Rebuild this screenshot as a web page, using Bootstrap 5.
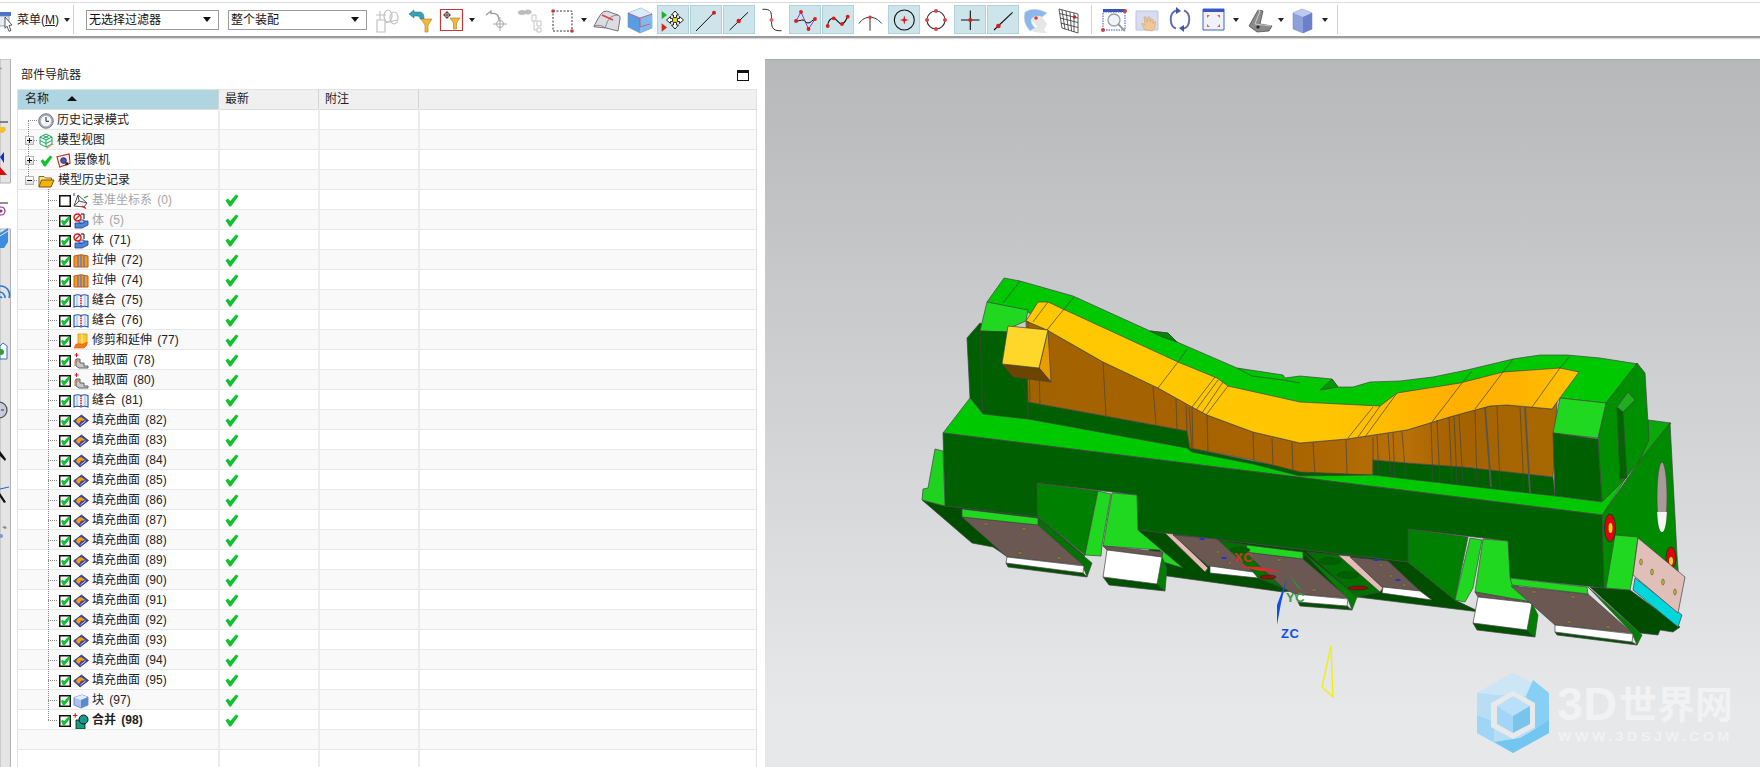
<!DOCTYPE html>
<html lang="zh-CN">
<head>
    <meta charset="UTF-8">
    <meta name="viewport" content="width=device-width, initial-scale=1.0">
    <title>部件导航器</title>
    <link href="https://cdn.jsdelivr.net/npm/bootstrap@5.3.0/dist/css/bootstrap.min.css" rel="stylesheet">
    <script src="https://cdn.jsdelivr.net/npm/bootstrap@5.3.0/dist/js/bootstrap.bundle.min.js"></script>
    <style>
        html, body { height: 767px; overflow: hidden; background: #fff; }
        body { font: 12px/20px "Liberation Sans", "Noto Sans CJK SC", sans-serif; color: #222; }

        /* toolbar */
        .cad-toolbar { margin-top: 2px; border-top: 1px solid #d9d9d9; border-bottom: 2px solid #9c9c9c; padding: 2px 0; height: 36px; box-shadow: 0 1px 1px #d8d8d8; }
        .tool-group { gap: 1px; }
        .tool { flex: none; width: 32px; height: 29px; padding: 0; border: 1px solid transparent; border-radius: 0; line-height: 0; }
        .tool svg { display: block; margin: -1px; width: 32px; height: 29px; }
        .tool-on { background: #cde4ea; border-color: #aed3dc; }
        .tool-narrow { width: 26px; }
        .tool-narrow svg { width: 26px; }
        .tool-caret { flex: none; width: 11px; height: 29px; position: relative; }
        .tool-caret::after { content: ""; position: absolute; left: 2px; top: 13px; border: 3.5px solid transparent; border-top: 4px solid #222; border-bottom: 0; }
        .caret-lg { width: 13px; }
        .caret-lg::after { left: 3px; }
        .caret-sm { width: 9px; }
        .caret-sm::after { left: 1px; }
        .caret-xl { width: 14px; }
        .caret-xl::after { left: 4px; }
        .tool-sep { flex: none; width: 1px; height: 29px; background: #d2d2d2; }
        .sep-a { margin: 0 12px 0 1px; }
        .sep-b { margin: 0 6px; }
        .sep-c { margin-left: 6px; }
        .menu-icon { flex: none; width: 13px; height: 24px; margin-right: 4px; }
        .menu-label { flex: none; width: 46px; white-space: nowrap; }
        .menu-label u { text-underline-offset: 1px; }
        .filter-select { flex: none; width: 133px; height: 20px; padding: 0 0 0 2px; font-size: 12px; line-height: 18px; color: #111; border: 1px solid #9a9a9a; border-radius: 0; background-position: right 7px center; background-size: 8px 5px; background-image: url("data:image/svg+xml,%3csvg xmlns='http://www.w3.org/2000/svg' viewBox='0 0 8 5'%3e%3cpath d='M0 0h8L4 5z' fill='%23111'/%3e%3c/svg%3e"); font-family: inherit; }
        .filter-wide { width: 139px; margin: 0 5px 0 9px; }

        /* workspace */
        .work-area { margin-top: 21px; height: 708px; }
        .res-strip { flex: none; width: 11px; }
        .res-strip svg { display: block; }
        .nav-panel { flex: none; width: 746px; padding-left: 6px; }
        .nav-title { height: 30px; padding: 2px 8px 0 4px; }
        .max-box { width: 12px; height: 11px; border: 1px solid #111; border-top-width: 3px; }
        .gutter { flex: none; width: 8px; }
        .view-port { flex: none; width: 995px; height: 708px; border-top: 1px solid #a9aaac; background: linear-gradient(#b7b8ba, #e7e8ea 92%); }
        .view-port svg { display: block; }

        /* tree table */
        .tree-table { width: 740px; table-layout: fixed; margin: 0; border-left: 1px solid #e2e2e2; border-top: 1px solid #e2e2e2; border-right: 1px solid #e2e2e2; font-size: 12px; color: #222; }
        .tree-table th, .tree-table td { padding: 0; height: 20px; line-height: 19px; border-bottom: 1px solid #e8e8e8; border-right: 2px solid #ececec; box-shadow: none; background: #fff; font-weight: 400; }
        .tree-table th { height: 20px; background: #f0f0f0; border-right: 1px solid #d4d4d4; border-bottom: 1px solid #dcdcdc; padding-left: 6px; }
        .tree-table th.sorted { background: #aed5e0; padding-left: 7px; }
        .tree-table tbody tr:nth-child(even) td { background: #f9f9f9; }
        .tree-table td:last-child, .tree-table th:last-child { border-right: 0; }
        .sort-arrow { display: inline-block; margin-left: 18px; vertical-align: 2px; border: 5px solid transparent; border-bottom: 5px solid #111; border-top: 0; }
        .tree-item { position: relative; height: 20px; padding-top: 1px; margin-bottom: -1px; white-space: nowrap; word-spacing: 2px; }
        .lv0 { padding-left: 20px; }
        .lv1 { padding-left: 41px; }
        .tree-item svg { flex: none; }
        .tree-item .node-icon { margin-left: 2px; margin-right: 3px; }
        .lv0 .node-icon { margin-left: 0; }
        .lv0 .cam-check { margin: 0 3px 0 2px; }
        .is-off { color: #a6a6a6; }
        .is-bold { font-weight: 700; }
        .latest-check { display: block; margin: 4px 0 0 5px; }
        .tree-item::before { content: ""; position: absolute; left: 10px; top: -1px; bottom: 0; border-left: 1px dotted #8a8a8a; }
        .tree-item::after { content: ""; position: absolute; left: 10px; top: 10px; width: 9px; border-top: 1px dotted #8a8a8a; }
        .lv1::before { left: 30px; }
        .lv1::after { left: 30px; width: 9px; }
        .line-start::before { top: 10px; }
        .line-end::before { bottom: 10px; }
        .exp-box { position: absolute; z-index: 1; left: 7px; top: 6px; width: 9px; height: 9px; border: 1px solid #b4b4b4; background: linear-gradient(#fff, #ddd); }
        .exp-box::before { content: ""; position: absolute; left: 1px; top: 3px; width: 5px; height: 1px; background: #111; }
        .exp-plus::after { content: ""; position: absolute; left: 3px; top: 1px; width: 1px; height: 5px; background: #111; }
        .cad-label { font: 700 13px "Liberation Sans", sans-serif; letter-spacing: .5px; }
        .wm-big { font: 700 47px "Liberation Sans", "Noto Sans CJK SC", sans-serif; }
        .wm-cjk { font: 700 38px "Noto Sans CJK SC", sans-serif; }
        .wm-url { font: 700 12px "Liberation Sans", sans-serif; letter-spacing: 3px; }
    </style>
</head>
<body>
    <!-- icon sprite -->
    <svg width="0" height="0" class="position-absolute">
        <symbol id="i-check" viewBox="0 0 14 13"><path d="M.5 6.500 3 4.600 5.200 7 11 .5l2.500 1.600L6 12.500H4.400z" fill="#10c22e"/></symbol>
        <symbol id="i-clock" viewBox="0 0 16 16"><circle cx="8" cy="8" r="7.300" fill="#aab0bc" stroke="#5c6470" stroke-width=".8"/><circle cx="8" cy="8" r="5.200" fill="#f6f6f6"/><path d="M8 4v4.300h3" fill="none" stroke="#222" stroke-width="1"/></symbol>
        <symbol id="i-view" viewBox="0 0 16 16"><path d="M8 1 14 4v7l-6 3-6-3V4zM2 4l6 3 6-3M8 7v7M5 2.500l6 3M11 2.500l-6 3M2 7.500l6 3 6-3" fill="none" stroke="#1aa862" stroke-width="1"/><path d="M8 15l6-3 .5-1.500 1.500.8-1 .3-6 4z" fill="#e24a20"/></symbol>
        <symbol id="i-camera" viewBox="0 0 16 16"><path d="M1 4 14 1l1 10-11 4z" fill="#fbeee8" stroke="#c8281c" stroke-width="1.200"/><circle cx="8" cy="8" r="3" fill="#4a5cae" stroke="#1c2a70"/><path d="M10 10h3v3h-3z" fill="#222"/></symbol>
        <symbol id="i-folder" viewBox="0 0 17 16"><path d="M1 14V3.500h5l1.500 1.500h6V7" fill="#f8e6a0" stroke="#8a6410"/><path d="M1 14 3.500 7H16l-3 7z" fill="#f4b400" stroke="#7a5808"/></symbol>
        <symbol id="i-datum" viewBox="0 0 16 16"><path d="M1 13 5 2l9 8-3 4zM5 2l1 6 8 2M6 8l-5 5" fill="#f2f2f2" stroke="#555" stroke-width="1"/><path d="M11 5l4-2" stroke="#2aa02a" stroke-width="1.300"/><path d="M9 13l4 2.500" stroke="#d02020" stroke-width="1.300"/><path d="M1 0v3" stroke="#2040c0" stroke-width="1"/></symbol>
        <symbol id="i-body" viewBox="0 0 16 16"><path d="M2 10h7V8h6v4l-6 3H2z" fill="#4f86d6" stroke="#1f3f90" stroke-width=".8"/><path d="M6 7h5v3H6z" fill="#a9c8f0" stroke="#1f3f90" stroke-width=".8"/><circle cx="4.500" cy="4.500" r="3.500" fill="#fff" stroke="#d81818" stroke-width="1.400"/><path d="M2 7l5-5" stroke="#d81818" stroke-width="1.200"/><path d="M8 1h3v5" fill="none" stroke="#111" stroke-width="1"/></symbol>
        <symbol id="i-extrude" viewBox="0 0 16 16"><path d="M1 3q7-2.500 14 0v11H1z" fill="#f49a20" stroke="#c25c08" stroke-width="1"/><path d="M5 2.500V14M8 2V14M11 2.500V14" stroke="#5870c8" stroke-width="1.200"/></symbol>
        <symbol id="i-sew" viewBox="0 0 16 16"><path d="M1 2.500q4-1.500 7 0 3-1.500 7 0V14q-4-1.500-7 0-3-1.500-7 0z" fill="#e8f2fc" stroke="#1f55b0" stroke-width="1.100"/><path d="M8 2.500V14" stroke="#d02828" stroke-width="1.600" stroke-dasharray="1.500 .8"/><path d="M4 3v10M12 3v10" stroke="#6f9ee0" stroke-width=".7"/></symbol>
        <symbol id="i-trim" viewBox="0 0 16 16"><path d="M5 1h9v10H5z" fill="#fbc738" stroke="#d69400" stroke-width=".8"/><path d="M9 1v10" stroke="#fff2a8"/><path d="M1 15l2-4h8l3-2v3l-3 3z" fill="#f47a10" stroke="#d2600c" stroke-width=".6"/></symbol>
        <symbol id="i-extract" viewBox="0 0 16 16"><path d="M3 6h4v4h4v3h4v2H6l-3-2z" fill="#c4c8cc" stroke="#555" stroke-width=".9"/><path d="M3 8h4M3 6l-1 2v5" fill="none" stroke="#d26a30" stroke-width=".9"/><path d="M1.500 2h4M3.500 0v4" stroke="#d82020" stroke-width="1.200"/></symbol>
        <symbol id="i-fill" viewBox="0 0 16 16"><path d="M.5 8 8.500 2 15.500 7.500 7 14z" fill="#3f479e" stroke="#23296e" stroke-width=".7"/><path d="M3 8.500Q4 4.500 8.500 4.300L12.500 7.300 8 7.800 6 11z" fill="#f5a00c"/><path d="M12.500 8 7.500 12" stroke="#e6e8f6" stroke-width=".8"/></symbol>
        <symbol id="i-block" viewBox="0 0 16 16"><path d="M1 4.500 9 2l6 2v8l-7 3-7-3z" fill="#a9c3ee" stroke="#5f7fc2" stroke-width=".8"/><path d="M1 4.500 8 7l7-3-6-2z" fill="#e0ebfb"/><path d="M8 7v8l7-3V4z" fill="#5f88d4"/></symbol>
        <symbol id="i-unite" viewBox="0 0 16 16"><path d="M3 7h9v9H3z" fill="#1a9a88" stroke="#111" stroke-width=".8"/><circle cx="10.500" cy="6.500" r="4.500" fill="#1a9a88" stroke="#111" stroke-width="1"/><path d="M0 2.500h4.500M2.200 .2v4.600" stroke="#e01010" stroke-width="1.100"/></symbol>

        <symbol id="t-chain" viewBox="0 0 32 29"><g fill="none" stroke="#c2c2c2" stroke-width="1.200"><path d="M5 15h8v12H5zM8 6v9M4 10h10"/><ellipse cx="16" cy="11" rx="4" ry="6"/><ellipse cx="22" cy="13" rx="4" ry="6"/><path d="M13 18l12-3"/></g></symbol>
        <symbol id="t-filter-back" viewBox="0 0 32 29"><path d="M4 9l5-4v2h5c4 0 5 2 5 7h-4c0-2-1-3-3-3H9v2z" fill="#38a0b0" stroke="#1f7080" stroke-width=".5"/><path d="M16 14h11l-4 6v7h-3v-7z" fill="#f2b83c" stroke="#a87a18" stroke-width=".6"/></symbol>
        <symbol id="t-filter-cross" viewBox="0 0 26 29"><path d="M2.500 4.500h22v21h-22z" fill="#fff" stroke="#c73838" stroke-width="1.200"/><circle cx="9" cy="10" r="2.500" fill="none" stroke="#8a2a2a"/><path d="M9 6v8M5 10h8" stroke="#222" stroke-width=".8"/><path d="M12 13h10l-3.500 5v6h-3v-6z" fill="#f2b83c" stroke="#a87a18" stroke-width=".6"/></symbol>
        <symbol id="t-undo-cross" viewBox="0 0 32 29"><path d="M6 10l5-4v2.500c5-.5 8 1 8 7" fill="none" stroke="#9a9a9a" stroke-width="1.300"/><circle cx="20" cy="19" r="3.500" fill="none" stroke="#a8a8a8"/><path d="M20 12v14M13 19h14" stroke="#a8a8a8"/></symbol>
        <symbol id="t-binoc" viewBox="0 0 32 29"><g fill="#bdbdbd"><ellipse cx="9" cy="7.500" rx="4" ry="2.500"/><ellipse cx="15" cy="7" rx="3.500" ry="2.500"/></g><path d="M19 10h4v6h-4zM24 16h4v5h-4zM24 23h4v4h-4zM21 16v9h3" fill="none" stroke="#c4c4c4"/></symbol>
        <symbol id="t-dash" viewBox="0 0 32 29"><path d="M7 6h19v20H7z" fill="none" stroke="#333" stroke-dasharray="2 1.500"/><circle cx="7" cy="6" r="1.800" fill="#d83030"/><circle cx="26" cy="26" r="1.800" fill="#d83030"/></symbol>
        <symbol id="t-wedge" viewBox="0 0 32 29"><path d="M3 21Q7 13 10 9q2-3 6-3l11 4q3 1 2 4l-2 12-12-3-10-1q-3 0-2-1z" fill="#dcdde2" stroke="#555" stroke-width=".8"/><path d="M3 21q8-2 11 2 2-8 6-11 3-2 7-2" fill="none" stroke="#666" stroke-width=".7"/><path d="M11 10l11 5" stroke="#e04040" stroke-width="1.500"/></symbol>
        <symbol id="t-cube-red" viewBox="0 0 32 29"><path d="M4 8 17 3l11 6v14l-12 5-12-6z" fill="#5a9ce0" stroke="#6d90c8" stroke-width=".6"/><path d="M4 8 16 13l12-4-11-6z" fill="#d8ecfb"/><path d="M16 13v15l12-5V9z" fill="#82b8ea"/><path d="M4 8l12 5 12-4M16 13v9l10-3" fill="none" stroke="#d84060" stroke-width=".7"/></symbol>
        <symbol id="t-snap" viewBox="0 0 32 29"><path d="M4.700 6 10 10l-5.300 4.300z" fill="#20b030"/><path d="M4.700 18.300 10 22.500l-5.300 4.200z" fill="#d02818"/><g fill="#fff" stroke="#111" stroke-width=".9"><path d="M18 6l-3.500 4H16.500v2.500h3V10h2zM18 24l-3.500-4H16.500v-2.500h3V20h2zM9.500 15l4-3.500v2h2v3h-2v2zM26.500 15l-4-3.500v2h-2v3h2v2z"/></g><circle cx="18" cy="15" r="2" fill="#ffe000" stroke="#b09000" stroke-width=".5"/></symbol>
        <symbol id="t-line-end" viewBox="0 0 32 29"><path d="M6 26 24 7.700" stroke="#111"/><circle cx="24" cy="7.700" r="2" fill="#d81c1c"/></symbol>
        <symbol id="t-line-mid" viewBox="0 0 32 29"><path d="M6.700 25 25 7.300" stroke="#111"/><circle cx="15.700" cy="16" r="2.200" fill="#d81c1c"/></symbol>
        <symbol id="t-curve" viewBox="0 0 32 29"><path d="M6.500 4.300c9-.5 9 3 9 10s0 12 10 11.400" fill="none" stroke="#333"/><circle cx="15.500" cy="15" r="2" fill="#e06a60"/></symbol>
        <symbol id="t-poly" viewBox="0 0 32 29"><path d="M7 16 12 7l7.500 17L26 14" fill="none" stroke="#a030d8"/><path d="M7 16c3 0 5-1 7-1s2 3 5 3 4-3 7-4" fill="none" stroke="#111"/><circle cx="7" cy="16" r="1.900" fill="#d81c1c"/><circle cx="12" cy="7" r="1.900" fill="#d81c1c"/><circle cx="19.500" cy="24" r="1.900" fill="#d81c1c"/><circle cx="26" cy="14" r="1.900" fill="#d81c1c"/></symbol>
        <symbol id="t-spline" viewBox="0 0 32 29"><path d="M5.700 21c0-5 3-8 6-7.700s5 6 8 5.700 4-4 6-7.300" fill="none" stroke="#111" stroke-width="1.100"/><circle cx="5.700" cy="21" r="1.900" fill="#d81c1c"/><circle cx="11.700" cy="13.300" r="1.900" fill="#d81c1c"/><circle cx="20" cy="19" r="1.900" fill="#d81c1c"/><circle cx="25.700" cy="11.700" r="1.900" fill="#d81c1c"/></symbol>
        <symbol id="t-arc" viewBox="0 0 32 29"><path d="M4 18.500C7 14 11 12.300 15 12.300s8 1.700 11.700 6.200M15 12.300v13.400" fill="none" stroke="#333"/><circle cx="15" cy="12.300" r="1.800" fill="#d83c3c"/></symbol>
        <symbol id="t-circle-c" viewBox="0 0 32 29"><circle cx="16.300" cy="15" r="10" fill="none" stroke="#111" stroke-width="1.100"/><path d="M16.300 10.500l1 3.500 3.500 1-3.500 1-1 3.500-1-3.500-3.500-1 3.500-1z" fill="#d81c1c"/></symbol>
        <symbol id="t-circle-4" viewBox="0 0 32 29"><circle cx="15" cy="15" r="9" fill="none" stroke="#333" stroke-width="1.100"/><g fill="#d84848"><circle cx="15" cy="6" r="2"/><circle cx="15" cy="24" r="2"/><circle cx="6" cy="15" r="2"/><circle cx="24" cy="15" r="2"/></g></symbol>
        <symbol id="t-cross" viewBox="0 0 32 29"><path d="M7 15h18.500M16.300 5.500V25" stroke="#111" stroke-width="1.100"/><circle cx="16.300" cy="15" r="2" fill="#d81c1c"/></symbol>
        <symbol id="t-line-low" viewBox="0 0 32 29"><path d="M7 25 25.600 7.300" stroke="#111" stroke-width="1.100"/><circle cx="11.400" cy="21" r="2.300" fill="#d81c1c"/></symbol>
        <symbol id="t-surface" viewBox="0 0 32 29"><path d="M5 7Q14 1 27 8l-5 4Q14 9 11 15q0 4 4 8l-5 3Q2 17 5 7z" fill="#8ab8e8" stroke="#c4d4e8" stroke-width=".6"/><path d="M10 26 15 23q4-4 12 5-9 0-17-2zM11 15q4-6 11-3l5 7-4 8z" fill="#e6e6e6"/><circle cx="16" cy="13" r="1.800" fill="#d83c3c"/></symbol>
        <symbol id="t-grid" viewBox="0 0 32 29"><path d="M6 4 25 9v19L9 23zM9 4.800 12 24.300M13 6 15.500 25M17 7l1.500 19M21 8v19M6.500 8.500 25 13M7 13l18 4.500M7.700 18 25 22.500" fill="none" stroke="#333" stroke-width=".8"/><circle cx="21.500" cy="12" r="1.800" fill="#d81c1c"/></symbol>
        <symbol id="t-zoom-box" viewBox="0 0 32 29"><path d="M5 4h22v3H5z" fill="#3a56b0"/><path d="M5 7h22v18H5z" fill="#fff" stroke="#3a56c0" stroke-dasharray="1.500 1"/><circle cx="16" cy="15" r="6" fill="#eef4fa" stroke="#a0a0a0" stroke-width="1.300"/><path d="M20 19l7 7" stroke="#999" stroke-width="1.800"/><circle cx="27" cy="6" r="2" fill="#d83c3c"/><circle cx="5" cy="25" r="2" fill="#d83c3c"/></symbol>
        <symbol id="t-hand" viewBox="0 0 32 29"><path d="M5 6h22v19H5z" fill="#d8dcf0" stroke="#c0c4d8"/><path d="M14 25c-2-3-4-6-3-7l3 2-1-8 2 0 1 5 1-5 2 0v5l1-3 2 .5v4l1-2 1.500.5c0 4-1 7-3 9z" fill="#f0c898" stroke="#c49a68" stroke-width=".5"/></symbol>
        <symbol id="t-rotate" viewBox="0 0 32 29"><path d="M12 5.500C5 8 5 21 12 23.500" fill="none" stroke="#5a70c0" stroke-width="2"/><path d="M20 23.500C27 21 27 8 20 5.500" fill="none" stroke="#6a6fa8" stroke-width="2"/><path d="M12 2l5 4-5 3zM20 27l-5-4 5-3z" fill="#3f56a8"/></symbol>
        <symbol id="t-fit" viewBox="0 0 32 29"><path d="M6 4h21v21H6z" fill="#f0f2fa" stroke="#4060c0"/><path d="M6 4h21v3H6z" fill="#3a56c0"/><path d="M10 10h3l-3 3zM23 10h-3l3 3zM10 22h3l-3-3zM23 22h-3l3-3z" fill="#e86040"/></symbol>
        <symbol id="t-gear" viewBox="0 0 32 29"><path d="M5 21 14 5l5 1-3 13 12 2-3 5-12 1z" fill="#8a8a8a" stroke="#444" stroke-width=".7"/><path d="M14 5l2 1-5 13 16 2" fill="none" stroke="#ddd" stroke-width=".8"/><circle cx="14" cy="22" r="1.600" fill="#222"/></symbol>
        <symbol id="t-cube" viewBox="0 0 32 29"><path d="M6 8 15 4l10 4v16l-9 4-10-4z" fill="#8da0dc" stroke="#7a8cc8" stroke-width=".6"/><path d="M6 8l10 4 9-4-10-4z" fill="#bccaf0"/><path d="M16 12v16l9-4V8z" fill="#6c80c8"/></symbol>
    </svg>

    <header class="cad-toolbar d-flex align-items-center">
        <svg class="menu-icon" viewBox="0 0 13 24"><path d="M-2 4h13v4H-2z" fill="#4a72c8"/><path d="M-2 8h11v10H-2z" fill="#e8ecf4" stroke="#7a8aa8" stroke-width=".8"/><path d="M5 9l7 8-3 .5 2 5-2 .8-2-5-2 2z" fill="#fff" stroke="#333" stroke-width=".8"/></svg>
        <span class="menu-label">菜单(<u>M</u>)</span>
        <span class="tool-caret caret-sm"></span>
        <span class="tool-sep sep-a"></span>
        <select class="form-select filter-select" aria-label="过滤器"><option>无选择过滤器</option></select>
        <select class="form-select filter-select filter-wide" aria-label="范围"><option>整个装配</option></select>
        <div class="tool-group d-flex align-items-center">
            <button type="button" class="btn tool"><svg><use href="#t-chain"/></svg></button>
            <button type="button" class="btn tool"><svg><use href="#t-filter-back"/></svg></button>
            <button type="button" class="btn tool tool-narrow"><svg viewBox="0 0 26 29"><use href="#t-filter-cross"/></svg></button>
            <span class="tool-caret caret-xl"></span>
            <button type="button" class="btn tool"><svg><use href="#t-undo-cross"/></svg></button>
            <button type="button" class="btn tool"><svg><use href="#t-binoc"/></svg></button>
            <button type="button" class="btn tool"><svg><use href="#t-dash"/></svg></button>
            <span class="tool-caret"></span>
            <button type="button" class="btn tool"><svg><use href="#t-wedge"/></svg></button>
            <button type="button" class="btn tool"><svg><use href="#t-cube-red"/></svg></button>
            <button type="button" class="btn tool tool-on"><svg><use href="#t-snap"/></svg></button>
            <button type="button" class="btn tool tool-on"><svg><use href="#t-line-end"/></svg></button>
            <button type="button" class="btn tool tool-on"><svg><use href="#t-line-mid"/></svg></button>
            <button type="button" class="btn tool"><svg><use href="#t-curve"/></svg></button>
            <button type="button" class="btn tool tool-on"><svg><use href="#t-poly"/></svg></button>
            <button type="button" class="btn tool tool-on"><svg><use href="#t-spline"/></svg></button>
            <button type="button" class="btn tool"><svg><use href="#t-arc"/></svg></button>
            <button type="button" class="btn tool tool-on"><svg><use href="#t-circle-c"/></svg></button>
            <button type="button" class="btn tool"><svg><use href="#t-circle-4"/></svg></button>
            <button type="button" class="btn tool tool-on"><svg><use href="#t-cross"/></svg></button>
            <button type="button" class="btn tool tool-on"><svg><use href="#t-line-low"/></svg></button>
            <button type="button" class="btn tool"><svg><use href="#t-surface"/></svg></button>
            <button type="button" class="btn tool"><svg><use href="#t-grid"/></svg></button>
        </div>
        <span class="tool-sep sep-b"></span>
        <div class="tool-group d-flex align-items-center">
            <button type="button" class="btn tool"><svg><use href="#t-zoom-box"/></svg></button>
            <button type="button" class="btn tool"><svg><use href="#t-hand"/></svg></button>
            <button type="button" class="btn tool"><svg><use href="#t-rotate"/></svg></button>
            <button type="button" class="btn tool"><svg><use href="#t-fit"/></svg></button>
            <span class="tool-caret caret-lg"></span>
            <button type="button" class="btn tool"><svg><use href="#t-gear"/></svg></button>
            <span class="tool-caret caret-sm"></span>
            <button type="button" class="btn tool"><svg><use href="#t-cube"/></svg></button>
            <span class="tool-caret"></span>
        </div>
        <span class="tool-sep sep-c"></span>
    </header>

    <div class="work-area d-flex">
        <aside class="res-strip">
            <svg width="11" height="708" viewBox="0 59 11 708">
                <path d="M0 59h10.500v124H0z" fill="#e4e4e4" stroke="#b0b0b0"/>
                <path d="M0 229h10.500v540H0z" fill="#e4e4e4" stroke="#b0b0b0"/>
                <path d="M0 68l2 1" stroke="#888"/>
                <path d="M0 122h8" stroke="#222"/>
                <path d="M0 127h5l1 3-3 3H0z" fill="#f0c030"/>
                <path d="M0 157l4-5v11z" fill="#1a2ac8"/>
                <path d="M0 175l7 0-7-8z" fill="#d80c0c"/>
                <path d="M0 203h8" stroke="#222"/>
                <circle cx="1" cy="211" r="4" fill="#fff" stroke="#903090" stroke-width="1.200"/>
                <circle cx="1" cy="211" r="1.500" fill="#903090"/>
                <path d="M0 233 8 228v14l-4 6H0z" fill="#3c8ce0"/>
                <path d="M0 236l8-5" stroke="#fff" stroke-width=".8"/>
                <path d="M0 286a9 9 0 0 1 9 12M0 292a6 6 0 0 1 5 6M0 297a2 2 0 0 1 2 1" fill="none" stroke="#2878d0" stroke-width="1.600"/>
                <path d="M0 346l3-3 4 3v13H0z" fill="#fff" stroke="#3070c8"/>
                <circle cx="1" cy="352" r="3" fill="#3a9a3a"/>
                <circle cx="-1" cy="410" r="8" fill="#c8ccd8" stroke="#555" stroke-width="1.300"/>
                <path d="M1 410h3" stroke="#335" stroke-width="1"/>
                <path d="M0 451l6 8-1 2-5-5z" fill="#111"/>
                <path d="M0 489l9-2" stroke="#2a60c0"/>
                <path d="M0 493l6 9-2 1-4-6z" fill="#111"/>
                <path d="M2 527l3-1 2 2-2 1z" fill="#888"/>
                <circle cx="1" cy="536" r="2" fill="#7a9ac8"/>
            </svg>
        </aside>

        <section class="nav-panel">
            <div class="nav-title d-flex justify-content-between align-items-center">
                <span>部件导航器</span>
                <span class="max-box"></span>
            </div>
            <table class="table tree-table">
                <colgroup><col class="col-name"><col><col><col></colgroup>
                <thead>
                    <tr>
                        <th class="sorted" width="201">名称<span class="sort-arrow"></span></th>
                        <th width="100">最新</th>
                        <th width="100">附注</th>
                        <th></th>
                    </tr>
                </thead>
                <tbody id="treeRows"></tbody>
            </table>
        </section>

        <div class="gutter"></div>

        <main class="view-port">
            <svg width="995" height="707" viewBox="765 60 995 707">
                <defs>
                    <linearGradient id="topFace" gradientUnits="userSpaceOnUse" x1="1026" y1="0" x2="1580" y2="0">
                        <stop offset="0" stop-color="#ffc800"/><stop offset=".55" stop-color="#ffc600"/><stop offset=".75" stop-color="#ffb000"/><stop offset=".88" stop-color="#ffb200"/><stop offset="1" stop-color="#ffc400"/>
                    </linearGradient>
                    <linearGradient id="wallFace" gradientUnits="userSpaceOnUse" x1="1026" y1="0" x2="1557" y2="0">
                        <stop offset="0" stop-color="#a36200"/><stop offset=".5" stop-color="#a86400"/><stop offset=".72" stop-color="#b87008"/><stop offset=".8" stop-color="#a46200"/><stop offset="1" stop-color="#a86800"/>
                    </linearGradient>
                </defs>

                <g stroke="#444" stroke-width=".7" stroke-linejoin="round">
                    <!-- rear band and tower -->
                    <path fill="#008800" d="M1150 331 1168 333 1177 342 1190 352 1160 345z"/>
                    <path fill="#00c800" d="M1004 278 1020 281 1073 296 1150 331 1160 335 1177 342 1237 368 1283 375 1285 378 1300 376 1332 379 1338 387 1353 387 1370 382 1400 381 1433 377 1467 370 1513 359 1540 355 1567 355 1600 358 1638 364 1606 403 1560 398 1400 430 1100 370 1028 312 987 302z"/>
                    <path fill="#008800" d="M1150 331 1168 333 1177 342 1162 337z"/>
                    <path fill="#009a00" d="M1320 390 1332 379 1338 387z"/>
                    <path fill="none" d="M1237 368 1252 376 1283 380 1300 383"/>
                    <path fill="#005f00" d="M967 338 980 323 1028 340 1030 420 983 414 970 398z"/>
                    <path fill="#20d820" d="M987 302 1028 310 1026 321 1012 327 1008 332 980 331z"/>
                    <path fill="#005f00" d="M980 331 1008 332 1028 402 1028 425 983 420z"/>

                    <!-- wall and top surface -->
                    <path fill="#005f00" d="M1028 402 1105 416 1187 431 1190 448 1253 461 1300 470 1373 473 1373 460 1407 463 1463 467 1553 477 1555 496 1373 480 1300 480 1190 456 1105 438 1028 425z"/>
                    <path fill="url(#wallFace)" d="M1026 321 1047 330 1103 362 1158 388 1192 407 1207 415 1253 432 1300 443 1347 439 1407 430 1453 416 1490 406 1507 405 1552 409 1557 402 1553 477 1463 467 1407 463 1373 460 1373 475 1300 472 1253 460 1190 448 1187 431 1105 416 1028 402z"/>
                    <path fill="url(#topFace)" d="M1026 321 1038 302 1048 302 1063 309 1178 362 1217 378 1228 386 1300 402 1380 406 1397 393 1460 383 1503 372 1560 368 1579 372 1557 402 1552 409 1507 405 1490 406 1453 416 1407 430 1347 439 1300 443 1253 432 1207 415 1192 407 1158 388 1103 362 1047 330z"/>
                    <path fill="none" d="M1033 322 1048 302M1047 330 1064 309M1158 388 1178 362M1192 407 1215 377M1196 410 1218 380M1202 413 1223 382M1206 415 1228 386M1432 422 1462 383M1475 409 1503 372M1532 407 1560 368M1003 303 1020 281M1064 309 1074 297M1178 362 1187 349M1462 383 1472 371M1503 372 1513 359M1560 368 1570 356M1348 438 1373 407M1358 437 1380 406M1365 437 1397 393"/>
                    <path fill="none" d="M1103 362 1106 416M1153 387 1156 425M1176 399 1177 430M1186 405 1187 431M1189 407 1192 452M1192 407 1193 452M1207 415 1208 453M1253 432 1254 462M1272 438 1273 467M1292 442 1293 472M1313 443 1315 475M1346 440 1347 474M1373 437 1373 475M1377 435 1379 475M1388 433 1391 478M1393 433 1395 480M1402 432 1406 482M1431 423 1433 483M1437 420 1440 483M1449 417 1452 483M1454 416 1457 484M1459 415 1463 485M1475 410 1477 486M1497 406 1500 488M1520 407 1524 490"/>
                    <path fill="none" stroke-width="1.800" stroke="#555" d="M1485 407 1491 487M1525 407 1530 493"/>
                    <path fill="none" d="M1028 321 1030 402M1038 335 1040 404"/>

                    <!-- yellow cube -->
                    <path fill="#e89c00" d="M1048 330 1051 382 1039 368z"/>
                    <path fill="#6e4500" d="M1002 364 1039 368 1051 382 1013 377z"/>
                    <path fill="#ffd72a" d="M1008 326 1048 330 1039 368 1002 364z"/>

                    <!-- right end -->
                    <path fill="#0aa80a" d="M1648 420 1671 423 1638 463 1648 440z"/>
                    <path fill="#008a00" d="M1670 423 1677 555 1680 595 1640 560 1603 590 1602 515 1638 463z"/>
                    <path fill="#008f00" d="M1606 403 1637 363 1645 373 1649 440 1638 463 1626 478 1602 502 1598 438z"/>
                    <path fill="#006400" d="M1617 407 1623 412 1627 478 1620 479z"/>
                    <path fill="#1fae1f" d="M1617 407 1628 392 1635 400 1623 412z"/>
                    <path fill="#20d820" d="M1560 398 1606 403 1598 438 1553 433z"/>
                    <path fill="#005f00" d="M1553 433 1598 439 1602 502 1555 496z"/>
                    <path fill="#00c800" d="M943 433 970 398 983 414 1028 419 1105 433 1187 448 1192 452 1253 464 1300 476 1373 475 1555 496 1602 502 1626 478 1602 515z"/>

                    <!-- front face -->
                    <path fill="#005f00" d="M943 433 1602 515 1604 588 1510 578 1508 541 1408 529 1408 562 1138 530 1137 495 1037 483 1038 517 945 506z"/>

                    <!-- lower band -->
                    <path fill="#004d00" d="M1138 530 1408 562 1455 600 1480 612 1300 590 1283 592 1167 576 1155 560z"/>
                    <path fill="#004d00" d="M922 500 945 506 1038 517 1085 556 1005 555 993 547 972 543z"/>
                    <path fill="#004d00" d="M1590 587 1630 590 1680 627 1673 632 1660 630 1658 635 1640 633z"/>

                    <!-- side panels -->
                    <path fill="#1fd21f" d="M935 449 943 451 945 506 922 500 923 489 928 488z"/>
                    <path fill="#008000" d="M1037 483 1098 491 1085 555 1038 517z"/>
                    <path fill="#20d820" d="M1098 491 1111 494 1102 545 1101 556 1085 555z"/>
                    <path fill="#20d820" d="M1112 493 1137 495 1138 530 1183 568 1163 562 1160 550 1103 546z"/>
                    <path fill="#008000" d="M1408 529 1468 537 1455 600 1408 562z"/>
                    <path fill="#20d820" d="M1470 538 1482 540 1473 588 1465 602 1455 600z"/>
                    <path fill="#20d820" d="M1483 539 1508 541 1510 577 1532 602 1475 592z"/>

                    <!-- plate 1 -->
                    <path fill="#007400" d="M1038 518 1092 563 1087 577 1083 566 1038 525z"/>
                    <path fill="#6b5852" d="M962 517 1038 525 1083 565 1007 557z"/>
                    <path fill="#20d820" d="M962 509 1038 518 1038 525 962 517z"/>
                    <path fill="#005200" d="M1006 563 1083 573 1087 577 1008 567z"/>
                    <path fill="#fff" d="M1007 557 1084 566 1083 573 1006 563z"/>

                    <!-- white block 1 -->
                    <path fill="#6b5852" d="M1103 546 1163 552 1162 557 1107 550z"/>
                    <path fill="#007f00" d="M1162 557 1167 568 1165 591 1157 584z"/>
                    <path fill="#005200" d="M1103 577 1157 584 1165 591 1109 585z"/>
                    <path fill="#fff" d="M1107 550 1162 557 1157 584 1103 577z"/>

                    <!-- plate 2 -->
                    <path fill="#007000" d="M1217 540 1247 545 1245 552 1283 588 1258 578 1253 572z"/>
                    <path fill="#e4bdb4" d="M1165 533 1173 534 1208 568 1205 572z"/>
                    <path fill="#6b5852" d="M1173 535 1217 539 1253 572 1208 566z"/>
                    <path fill="#fff" d="M1210 566 1253 572 1258 578 1210 573z"/>

                    <!-- plate 3 -->
                    <path fill="#007000" d="M1307 552 1338 555 1380 592 1357 597z"/>
                    <path fill="#008000" d="M1303 552 1357 597 1352 610 1348 599z"/>
                    <path fill="#6b5852" d="M1245 552 1303 559 1348 598 1295 594 1283 588z"/>
                    <path fill="#20d820" d="M1247 545 1303 552 1303 559 1245 552z"/>
                    <path fill="#005200" d="M1298 602 1347 606 1352 610 1300 606z"/>
                    <path fill="#fff" d="M1295 594 1348 599 1347 606 1298 602z"/>

                    <!-- plate 4 -->
                    <path fill="#e4bdb4" d="M1338 555 1350 556 1383 588 1380 592z"/>
                    <path fill="#6b5852" d="M1350 557 1388 561 1420 591 1383 588z"/>
                    <path fill="#fff" d="M1383 587 1420 591 1432 600 1382 593z"/>

                    <!-- white block 2 -->
                    <path fill="#6b5852" d="M1475 592 1530 602 1532 603 1478 597z"/>
                    <path fill="#007f00" d="M1532 603 1538 615 1535 637 1527 630z"/>
                    <path fill="#005200" d="M1473 623 1527 630 1535 637 1477 630z"/>
                    <path fill="#fff" d="M1478 597 1532 603 1527 630 1473 623z"/>

                    <!-- plate 5 -->
                    <path fill="#008000" d="M1588 587 1642 635 1637 645 1632 633z"/>
                    <path fill="#6b5852" d="M1511 586 1588 594 1632 633 1555 625z"/>
                    <path fill="#20d820" d="M1510 578 1587 587 1588 594 1512 585z"/>
                    <path fill="#005200" d="M1555 632 1632 642 1637 645 1557 635z"/>
                    <path fill="#fff" d="M1555 625 1633 634 1632 642 1555 632z"/>

                    <!-- end plate -->
                    <path fill="#20d820" d="M1615 535 1638 537 1633 575 1630 590 1606 588z"/>
                    <path fill="#00d7dc" d="M1635 578 1682 615 1678 627 1633 590z"/>
                </g>

                <!-- holes -->
                <ellipse cx="1610" cy="528" rx="5.500" ry="14" fill="#e00010" stroke="#005000"/>
                <ellipse cx="1610.500" cy="528" rx="2" ry="5" fill="#e0d820"/>
                <ellipse cx="1671" cy="558" rx="5" ry="11" fill="#e00010" stroke="#005000"/>
                <ellipse cx="1671" cy="561" rx="2" ry="4" fill="#e0d820"/>
                <path d="M1638 538 1685 577 1678 613 1633 575z" fill="#e0bfb8" stroke="#444" stroke-width=".7"/>
                <ellipse cx="1662" cy="497" rx="5" ry="35" fill="#a89a98" stroke="#444" stroke-width=".6"/>
                <path d="M1657.200 512h9.600c-.5 12-2 20-4.800 20s-4.300-8-4.800-20z" fill="#f8f4f4"/>
                <g fill="#c8c020" stroke="#333" stroke-width=".5">
                    <ellipse cx="1641" cy="562" rx="1.300" ry="3"/><ellipse cx="1652" cy="572" rx="1.300" ry="3"/><ellipse cx="1663" cy="582" rx="1.300" ry="3"/><ellipse cx="1675" cy="592" rx="1.300" ry="3"/>
                    <ellipse cx="986" cy="524" rx="2.500" ry=".8"/><ellipse cx="1024" cy="529" rx="2.500" ry=".8"/><ellipse cx="1020" cy="553" rx="2.500" ry=".8"/><ellipse cx="1059" cy="558" rx="2.500" ry=".8"/>
                    <ellipse cx="1534" cy="592" rx="2.500" ry=".8"/><ellipse cx="1573" cy="597" rx="2.500" ry=".8"/><ellipse cx="1569" cy="622" rx="2.500" ry=".8"/><ellipse cx="1608" cy="627" rx="2.500" ry=".8"/>
                    <ellipse cx="1279" cy="560" rx="2.500" ry=".8"/><ellipse cx="1314" cy="590" rx="2.500" ry=".8"/><ellipse cx="1381" cy="565" rx="2" ry=".8"/><ellipse cx="1391" cy="576" rx="2" ry=".8"/><ellipse cx="1404" cy="585" rx="2" ry=".8"/><ellipse cx="1218" cy="552" rx="2" ry=".8"/><ellipse cx="1230" cy="563" rx="2" ry=".8"/>
                </g>
                <g fill="#2030d0"><ellipse cx="1202" cy="539" rx="3" ry="1"/><ellipse cx="1224" cy="558" rx="3" ry="1"/><ellipse cx="1376" cy="560" rx="3" ry="1"/><ellipse cx="1398" cy="580" rx="3" ry="1"/></g>
                <g fill="#006000" stroke="#004d00" stroke-width=".5"><ellipse cx="1330" cy="561" rx="11" ry="3.500"/><ellipse cx="1348" cy="575" rx="11" ry="3.500"/><ellipse cx="1240" cy="550" rx="10" ry="3"/></g>
                <g fill="#8c1018" stroke="#5a0808" stroke-width=".5"><ellipse cx="1358" cy="588" rx="10" ry="2"/><ellipse cx="1268" cy="577" rx="8" ry="2"/></g>

                <!-- triad -->
                <path d="M1237 566 1260 567 1283 572 1260 571z" fill="#d83028"/>
                <path d="M1289 574 1303 591 1297 587z" fill="#2f8f3f"/>
                <path d="M1287 578 1281 603 1277 625 1277 605z" fill="#0f4fe8"/>
                <text class="cad-label" x="1234" y="562" fill="#d83028">XC</text>
                <text class="cad-label" x="1286" y="602" fill="#3a9a48">YC</text>
                <text class="cad-label" x="1281" y="638" fill="#0f4fe8">ZC</text>
                <path d="M1331 646 1322 687 1333 697z" fill="none" stroke="#f0f000" stroke-width="1.300"/>

                <!-- watermark -->
                <path d="M1513 673 1549 693 1549 733 1513 753 1477 733 1477 693z" fill="#b8def6"/>
                <path d="M1513 673 1533 683 1540 705 1526 696 1497 695 1477 693z" fill="#cde6f6"/>
                <path d="M1533 680 1549 693 1549 725 1537 740 1533 712 1526 696z" fill="#87cff5"/>
                <path d="M1549 720 1549 733 1513 753 1494 742 1520 738 1537 728z" fill="#72c6f0"/>
                <path d="M1513 753 1477 733 1477 715 1494 722 1494 742z" fill="#9fd6f6"/>
                <path d="M1513 691 1535 703 1535 727 1513 739 1491 727 1491 703z" fill="#e8e9eb"/>
                <path d="M1513 696 1530 706 1513 716 1497 706z" fill="#b9e0f8"/>
                <path d="M1497 706 1513 716 1513 733 1497 724z" fill="#a2d6f6"/>
                <path d="M1530 706 1513 716 1513 733 1530 724z" fill="#78c4ec"/>
                <text class="wm-big" x="1557" y="720" fill="#f1f2f4">3D</text>
                <text class="wm-cjk" x="1619" y="718" fill="#f1f2f4">世界网</text>
                <text class="wm-url" x="1558" y="741" fill="#f1f2f4" textLength="175" lengthAdjust="spacingAndGlyphs">WWW.3DSJW.COM</text>
            </svg>
        </main>
    </div>

    <script>
        // tree rows: [icon, label, state]
        const fillRows = [82, 83, 84, 85, 86, 87, 88, 89, 90, 91, 92, 93, 94, 95].map(n => ['i-fill', `填充曲面 (${n})`]);
        const featureRows = [
            ['i-datum', '基准坐标系 (0)', 'off-unchecked'],
            ['i-body', '体 (5)', 'off'],
            ['i-body', '体 (71)'],
            ['i-extrude', '拉伸 (72)'],
            ['i-extrude', '拉伸 (74)'],
            ['i-sew', '缝合 (75)'],
            ['i-sew', '缝合 (76)'],
            ['i-trim', '修剪和延伸 (77)'],
            ['i-extract', '抽取面 (78)'],
            ['i-extract', '抽取面 (80)'],
            ['i-sew', '缝合 (81)'],
            ...fillRows,
            ['i-block', '块 (97)'],
            ['i-unite', '合并 (98)', 'bold']
        ];

        const icon = (id, w, h, cls = '') => `<svg class="${cls}" width="${w}" height="${h}"><use href="#${id}"/></svg>`;
        const check = icon('i-check', 14, 13, 'latest-check');

        const checkbox = on => `<svg width="12" height="12" viewBox="0 0 12 12"><rect x=".75" y=".75" width="10.500" height="10.500" fill="#fff" stroke="#111" stroke-width="1.500"/>${on ? '<path d="M2 6 3.800 4.600 5 6.300 9.500 1.500 11.500 3 5.500 10.500H4z" fill="#10c22e"/>' : ''}</svg>`;

        function row(inner, latest = '') {
            return `<tr><td>${inner}</td><td>${latest}</td><td></td><td></td></tr>`;
        }

        const topRows = [
            row(`<div class="tree-item lv0 line-start d-flex align-items-center">${icon('i-clock', 16, 16, 'node-icon')}<span>历史记录模式</span></div>`),
            row(`<div class="tree-item lv0 d-flex align-items-center"><span class="exp-box exp-plus"></span>${icon('i-view', 16, 16, 'node-icon')}<span>模型视图</span></div>`),
            row(`<div class="tree-item lv0 d-flex align-items-center"><span class="exp-box exp-plus"></span>${icon('i-check', 13, 12, 'cam-check')}${icon('i-camera', 15, 15, 'node-icon')}<span>摄像机</span></div>`),
            row(`<div class="tree-item lv0 line-end d-flex align-items-center"><span class="exp-box"></span>${icon('i-folder', 17, 16, 'node-icon')}<span>模型历史记录</span></div>`)
        ];

        const childRows = featureRows.map(([id, label, state], i) => {
            const unchecked = state === 'off-unchecked';
            const dim = state === 'off' || unchecked;
            const cls = ['tree-item', 'lv1', 'd-flex', 'align-items-center'];
            if (i === featureRows.length - 1) cls.push('line-end');
            const text = `<span class="${dim ? 'is-off' : ''} ${state === 'bold' ? 'is-bold' : ''}">${label}</span>`;
            return row(`<div class="${cls.join(' ')}">${checkbox(!unchecked)}${icon(id, 16, 16, 'node-icon')}${text}</div>`, check);
        });

        document.getElementById('treeRows').innerHTML = [...topRows, ...childRows, row(''), row('')].join('');
    </script>
</body>
</html>
